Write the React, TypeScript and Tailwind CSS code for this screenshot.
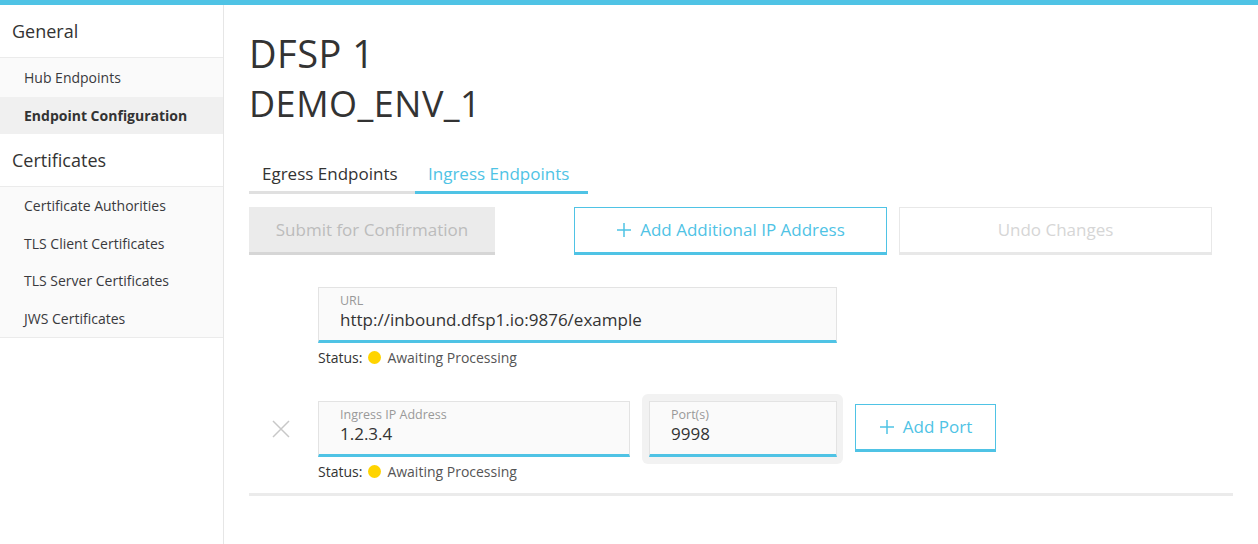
import React from 'react';

const font = { fontFamily: '"Open Sans", "Noto Sans", sans-serif' };

const SideHeader: React.FC<{ label: string }> = ({ label }) => (
  <div className="h-[53px] flex items-center pl-3 text-[18px] text-[#333] border-b border-[#ebebeb] bg-white">
    {label}
  </div>
);

const SideItem: React.FC<{ label: string; active?: boolean }> = ({ label, active }) => (
  <div
    className={`h-[37.5px] flex items-center pl-6 text-[14px] ${
      active ? 'bg-[#f0f0f0] font-bold text-[13.6px] text-[#333]' : 'text-[#39393d]'
    }`}
  >
    {label}
  </div>
);

const Status: React.FC = () => (
  <div className="flex items-center h-[20px] text-[14px] text-[#555] mt-[4px]">
    <span className="text-[#333]">Status:</span>
    <span className="inline-block w-[13px] h-[13px] rounded-full bg-[#ffd400] ml-[6px] mr-[6px]" />
    <span>Awaiting Processing</span>
  </div>
);

const Field: React.FC<{ label: string; value: string; width: string }> = ({ label, value, width }) => (
  <div className={`${width} h-[56px] bg-[#fafafa] border border-[#e3e3e3] border-b-[3px] border-b-[#4fc3e5] pl-[21px] pt-[4px] flex flex-col`}>
    <span className="text-[12.5px] leading-[17px] text-[#999]">{label}</span>
    <span className="text-[17px] leading-[22px] text-[#333]">{value}</span>
  </div>
);

const PlusIcon: React.FC = () => (
  <svg width="16" height="16" viewBox="0 0 16 16" className="mr-[8px]">
    <path d="M8 1v14M1 8h14" stroke="#4fc3e5" strokeWidth="1.5" fill="none" />
  </svg>
);

const App: React.FC = () => {
  return (
    <div className="w-[1258px] h-[544px] bg-white flex flex-col overflow-hidden" style={font}>
      <div className="h-[5px] bg-[#4fc3e5]" />
      <div className="flex flex-1">
        <aside className="w-[224px] border-r border-[#e6e6e6] flex flex-col">
          <SideHeader label="General" />
          <div className="bg-[#fafafa] pt-[1px]">
            <SideItem label="Hub Endpoints" />
            <SideItem label="Endpoint Configuration" active />
          </div>
          <SideHeader label="Certificates" />
          <div className="bg-[#fafafa] border-b border-[#ebebeb]">
            <SideItem label="Certificate Authorities" />
            <SideItem label="TLS Client Certificates" />
            <SideItem label="TLS Server Certificates" />
            <SideItem label="JWS Certificates" />
          </div>
        </aside>

        <main className="flex-1 pl-[25px] pr-[25px]">
          <h1 className="text-[38px] leading-[48px] text-[#333] mt-[24px] tracking-[0.5px]">DFSP 1</h1>
          <h2 className="text-[36px] leading-[48px] text-[#333] mt-[3px] tracking-[0.5px]">DEMO_ENV_1</h2>

          <div className="flex mt-[36px] text-[17px] leading-[20px]">
            <div className="w-[166px] h-[30px] pl-[13px] text-[#333] border-b-[3px] border-[#e0e0e0]">
              Egress Endpoints
            </div>
            <div className="w-[173px] h-[30px] pl-[13px] text-[#4fc3e5] border-b-[3px] border-[#4fc3e5]">
              Ingress Endpoints
            </div>
          </div>

          <div className="flex mt-[13px] text-[17px]">
            <div className="w-[246px] h-[48px] bg-[#ebebeb] border-b-[3px] border-[#d6d6d6] flex items-center justify-center text-[#bcbcbc]">
              Submit for Confirmation
            </div>
            <div className="ml-[79px] w-[313px] h-[48px] border border-[#4fc3e5] border-b-[3px] flex items-center justify-center text-[#4fc3e5]">
              <PlusIcon />
              Add Additional IP Address
            </div>
            <div className="ml-[12px] w-[313px] h-[48px] border border-[#e8e8e8] border-b-[3px] flex items-center justify-center text-[#d6d6d6]">
              Undo Changes
            </div>
          </div>

          <div className="ml-[69px] mt-[32px]">
            <Field label="URL" value="http://inbound.dfsp1.io:9876/example" width="w-[519px]" />
            <Status />
          </div>

          <div className="flex mt-[34px] items-start">
            <div className="w-[69px] h-[56px] flex items-center pl-[23px]">
              <svg width="18" height="18" viewBox="0 0 18 18">
                <path d="M1 1L17 17M17 1L1 17" stroke="#c8c8c8" strokeWidth="1.5" fill="none" />
              </svg>
            </div>
            <div>
              <Field label="Ingress IP Address" value="1.2.3.4" width="w-[312px]" />
              <Status />
            </div>
            <div className="ml-[12px] -mt-[7px] p-[7px] pr-[6px] bg-[#f2f2f2] rounded-[6px]">
              <Field label="Port(s)" value="9998" width="w-[188px]" />
            </div>
            <div className="ml-[12px] mt-[3px] w-[141px] h-[48px] border border-[#4fc3e5] border-b-[3px] flex items-center justify-center text-[17px] text-[#4fc3e5]">
              <PlusIcon />
              Add Port
            </div>
          </div>

          <div className="mt-[12px] h-[3px] bg-[#ebebeb] w-[984px]" />
        </main>
      </div>
    </div>
  );
};

export default App;
